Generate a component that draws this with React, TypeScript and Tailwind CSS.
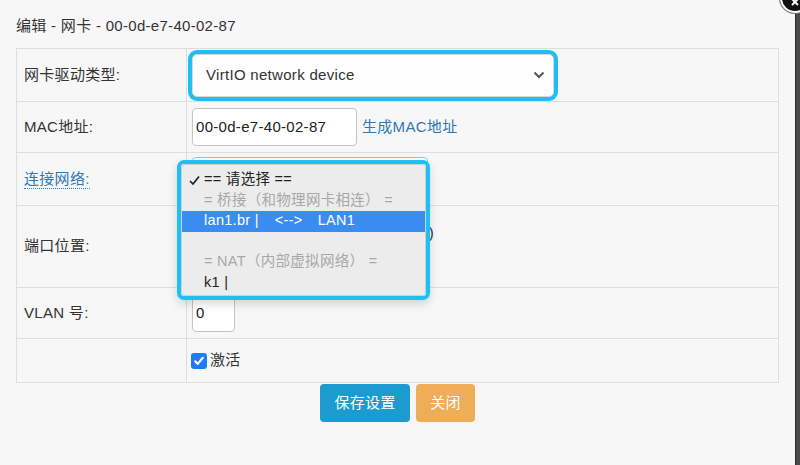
import React from "react";

const font = { fontFamily: '"Liberation Sans","Noto Sans CJK SC",sans-serif' };

export default function App() {
  return (
    <div
      className="relative w-[800px] h-[465px] overflow-hidden bg-[#f7f7f7] flex text-[#333] text-[15px] tracking-[0.3px]"
      style={font}
    >
      <div className="w-[795px] flex flex-col pl-4 pt-4">
        <div className="h-[20px] leading-[20px] text-[15px] text-[#333]">
          编辑 - 网卡 - 00-0d-e7-40-02-87
        </div>
        <table className="mt-[12px] w-[763px] border-collapse table-fixed">
          <colgroup>
            <col className="w-[170px]" />
            <col />
          </colgroup>
          <tbody>
            <tr className="h-[53px]">
              <td className="border border-[#dedede] pl-[7px] align-middle">网卡驱动类型:</td>
              <td className="border border-[#dedede] pl-[5px] align-middle">
                <div className="w-[362px] h-[43px] rounded-[5px] bg-[#fefefe] border border-[#d6d6d6] ring-4 ring-[#1ec0f4] flex items-center justify-between pl-[13px] pr-[8px]">
                  <span>VirtIO network device</span>
                  <svg width="12" height="8" viewBox="0 0 12 8">
                    <path d="M1.5 1.5 L6 6 L10.5 1.5" fill="none" stroke="#555" strokeWidth="2" />
                  </svg>
                </div>
              </td>
            </tr>
            <tr className="h-[51px]">
              <td className="border border-[#dedede] pl-[7px] align-middle">MAC地址:</td>
              <td className="border border-[#dedede] pl-[5px] align-middle">
                <div className="flex items-center">
                  <div className="w-[165px] h-[38px] rounded-[4px] bg-white border border-[#c4c4c4] flex items-center pl-[3px] text-[#222]">
                    00-0d-e7-40-02-87
                  </div>
                  <span className="ml-[5px] text-[#2f78b6]">生成MAC地址</span>
                </div>
              </td>
            </tr>
            <tr className="h-[53px]">
              <td className="border border-[#dedede] pl-[7px] align-middle">
                <span className="text-[#2f78b6] border-b border-dotted border-[#2f78b6] pb-[1px]">连接网络:</span>
              </td>
              <td className="border border-[#dedede] pl-[5px] align-top pt-[4px]">
                <div className="w-[236px] h-[38px] rounded-[4px] bg-white border border-[#8cc8f0]" />
              </td>
            </tr>
            <tr className="h-[82px]">
              <td className="border border-[#dedede] pl-[7px] align-middle">端口位置:</td>
              <td className="border border-[#dedede] pl-[5px] align-top pt-[15px]">
                <div className="w-[242px] text-right whitespace-nowrap overflow-hidden leading-[24px]">
                  )
                </div>
              </td>
            </tr>
            <tr className="h-[51px]">
              <td className="border border-[#dedede] pl-[7px] align-middle">VLAN 号:</td>
              <td className="border border-[#dedede] pl-[5px] align-middle">
                <div className="w-[43px] h-[38px] rounded-[4px] bg-white border border-[#c4c4c4] flex items-center pl-[3px] text-[#222]">
                  0
                </div>
              </td>
            </tr>
            <tr className="h-[44px]">
              <td className="border border-[#dedede]"></td>
              <td className="border border-[#dedede] pl-[4px] align-middle">
                <div className="flex items-center">
                  <div className="w-[16px] h-[16px] rounded-[3px] bg-[#1f7bf2] flex items-center justify-center">
                    <svg width="12" height="12" viewBox="0 0 12 12">
                      <path d="M2.2 6.3 L4.8 8.9 L9.8 2.8" fill="none" stroke="white" strokeWidth="2.2" strokeLinecap="round" strokeLinejoin="round" />
                    </svg>
                  </div>
                  <span className="ml-[3px]">激活</span>
                </div>
              </td>
            </tr>
          </tbody>
        </table>
        <div className="w-[763px] flex justify-center gap-[6px] mt-[1px]">
          <div className="w-[90px] h-[38px] rounded-[4px] bg-[#1b9bd0] text-white flex items-center justify-center">
            保存设置
          </div>
          <div className="w-[59px] h-[38px] rounded-[4px] bg-[#f0ad57] text-white flex items-center justify-center">
            关闭
          </div>
        </div>
      </div>
      <div className="w-[5px] h-full bg-[#4a4a4a] border-l border-[#2e2e2e]" />

      {/* close button at top-right */}
      <div className="absolute left-[780px] top-[-17px] w-[30px] h-[30px] rounded-full bg-[#111] border-2 border-white shadow-[0_0_0_1px_#777] flex items-end justify-center pb-[4px]">
        <svg width="10" height="10" viewBox="0 0 10 10">
          <path d="M2 2 L8 8 M8 2 L2 8" stroke="white" strokeWidth="2" />
        </svg>
      </div>

      {/* dropdown popup */}
      <div className="absolute left-[177px] top-[160px] w-[253px] h-[140px] rounded-[7px] border-4 border-[#1ec0f4] shadow-[0_4px_10px_rgba(0,0,0,0.15)]">
        <div className="w-full h-full rounded-[4px] bg-[#ececec] border border-[#cfcfcf] pt-[5px] text-[14.5px]">
          <div className="h-[20.5px] flex items-center text-[#222]">
            <span className="w-[22px] flex justify-center pl-[2px]">
              <svg width="11" height="11" viewBox="0 0 11 11">
                <path d="M1 6 L4 9 L10 1.5" fill="none" stroke="#222" strokeWidth="1.7" />
              </svg>
            </span>
            <span>== 请选择 ==</span>
          </div>
          <div className="h-[20.5px] flex items-center pl-[22px] text-[#a8a8a8]">
            = 桥接（和物理网卡相连） =
          </div>
          <div className="h-[20.5px] flex items-center pl-[22px] bg-[#3b8cf0] text-white">
            <span>lan1.br |</span>
            <span className="ml-[16px]">&lt;--&gt;</span>
            <span className="ml-[15px]">LAN1</span>
          </div>
          <div className="h-[20.5px]" />
          <div className="h-[20.5px] flex items-center pl-[22px] text-[#a8a8a8]">
            = NAT（内部虚拟网络） =
          </div>
          <div className="h-[20.5px] flex items-center pl-[22px] text-[#222]">k1 |</div>
        </div>
      </div>
    </div>
  );
}
